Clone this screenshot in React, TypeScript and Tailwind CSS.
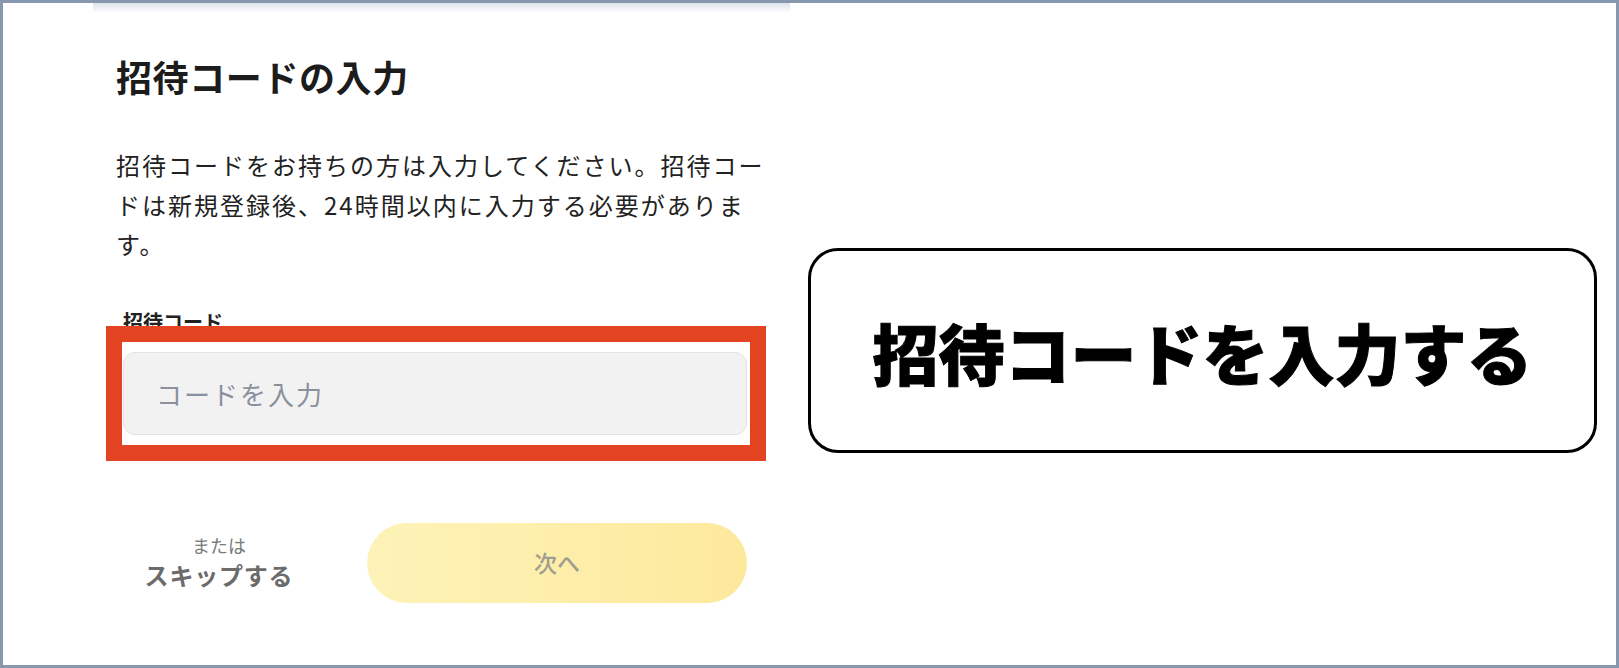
import React from "react";

const JP = { fontFamily: '"Noto Sans CJK JP", "Noto Sans", sans-serif' };

export default function App() {
  return (
    <div
      className="w-[1619px] h-[668px] bg-white border-[3px] border-[#8797ad] flex"
      style={JP}
    >
      {/* Left column: the form */}
      <div className="relative w-[787px] h-full pl-[113px] pt-[51px]">
        <div className="absolute left-[90px] top-0 right-0 h-[10px] bg-linear-to-b from-[#dde2ec] to-white/0" />
        <h1 className="text-[36px] leading-[44px] font-bold tracking-[0.6px] text-[#1c1c1c] whitespace-nowrap">
          招待コードの入力
        </h1>
        <div className="mt-[47px] text-[24px] leading-[39.5px] tracking-[2px] text-[#222] whitespace-nowrap">
          <div>招待コードをお持ちの方は入力してください。招待コー</div>
          <div>ドは新規登録後、24時間以内に入力する必要がありま</div>
          <div>す。</div>
        </div>
        <div className="ml-[7px] mt-[44px]">
          <label className="block text-[20px] leading-[28px] font-bold text-[#222] whitespace-nowrap">
            招待コード
          </label>
          <div className="relative mt-[16px] w-[624px]">
            <div className="h-[83px] rounded-[12px] bg-[#f2f2f2] border border-[#e3e3e3] flex items-center pl-[32px] text-[26px] tracking-[2px] text-[#8a909c]">
              コードを入力
            </div>
            <div className="absolute -top-[26px] -left-[17px] -right-[19px] -bottom-[26px] border-[16px] border-[#e34320] pointer-events-none" />
          </div>
          <div className="mt-[88px] flex items-center">
            <div className="w-[192px] flex flex-col items-center">
              <span className="text-[18px] leading-[24px] text-[#7a7a7a]">または</span>
              <span className="text-[24px] leading-[36px] font-bold text-[#6b6b6b] tracking-[0.8px]">
                スキップする
              </span>
            </div>
            <button className="ml-[52px] w-[380px] h-[80px] rounded-full bg-linear-to-r from-[#fdf3b8] to-[#fde99c] text-[23px] font-medium text-[#a09e8e] flex items-center justify-center">
              次へ
            </button>
          </div>
        </div>
      </div>

      {/* Right column: callout */}
      <div className="flex-1 pl-[18px] pr-[19px] pt-[245px]">
        <div className="h-[205px] rounded-[30px] border-[3px] border-black flex items-center justify-center">
          <span className="text-[66px] leading-none font-black text-black whitespace-nowrap [-webkit-text-stroke:1px_black]">
            招待コードを入力する
          </span>
        </div>
      </div>
    </div>
  );
}
